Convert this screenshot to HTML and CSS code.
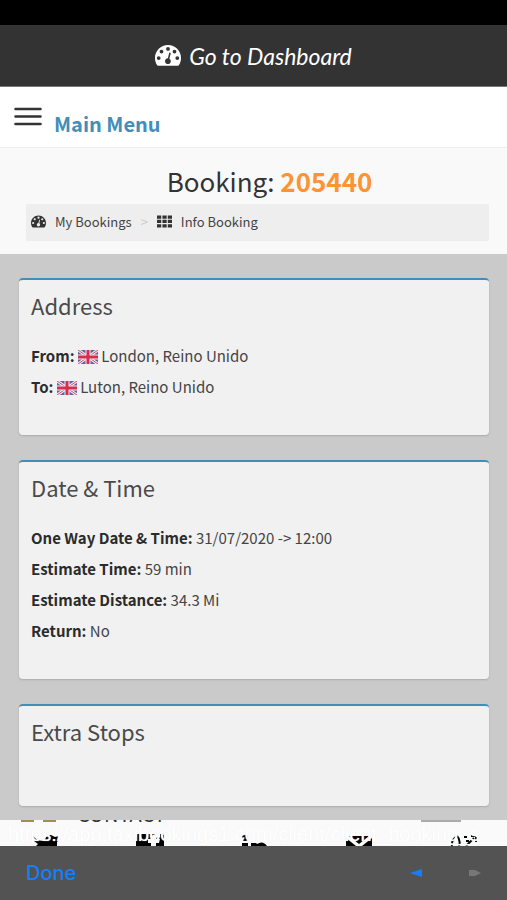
FILE: index.html
```html
<!DOCTYPE html>
<html lang="en">
<head>
<meta charset="utf-8">
<meta name="viewport" content="width=device-width, initial-scale=1">
<title>Booking: 205440</title>
<link rel="stylesheet" href="styles.css">
</head>
<body>
<svg class="defs" aria-hidden="true">
  <symbol id="gauge" viewBox="0 0 26 21">
    <path fill-rule="evenodd" d="M13 0C5.800 0 0 5.800 0 13c0 2.600.7 5 2 7 .3.500.700.800 1.300.800h19.400c.600 0 1-.300 1.300-.800 1.300-2 2-4.400 2-7C26 5.800 20.200 0 13 0zM3.700 11.200a1.900 1.900 0 1 1 0 3.800 1.900 1.900 0 0 1 0-3.800zM6.500 4.700a1.900 1.900 0 1 1 0 3.800 1.900 1.900 0 0 1 0-3.800zM13 2a1.900 1.900 0 1 1 0 3.800A1.900 1.900 0 0 1 13 2zM19.500 4.700a1.900 1.900 0 1 1 0 3.800 1.900 1.900 0 0 1 0-3.800zM22.300 11.200a1.900 1.900 0 1 1 0 3.800 1.900 1.900 0 0 1 0-3.800zM14.300 7.500l1.500.400-1.400 5.800a2.900 2.900 0 1 1-1.500-.4z"/>
  </symbol>
  <symbol id="flag" viewBox="0 0 20 14">
    <rect width="20" height="14" rx="1" fill="#5b68a5"/>
    <path d="M0 0l20 14M20 0L0 14" stroke="#f5e9ef" stroke-width="3"/>
    <path d="M0 0l20 14M20 0L0 14" stroke="#d8476b" stroke-width="1"/>
    <path d="M10 0v14M0 7h20" stroke="#f5e9ef" stroke-width="5"/>
    <path d="M10 0v14M0 7h20" stroke="#d52f50" stroke-width="3"/>
  </symbol>
</svg>
<div class="screen">
  <div class="status"></div>
  <header class="dash"><a href="#"><svg class="dash-icon" aria-hidden="true"><use href="#gauge"/></svg>Go to Dashboard</a></header>
  <nav class="menu">
    <button type="button" aria-label="Toggle menu"><svg viewBox="0 0 28 20" aria-hidden="true"><path d="M1.500 2h25M1.500 9.500h25M1.500 17h25"/></svg></button>
    <a href="#">Main Menu</a>
  </nav>
  <section class="heading">
    <h1>Booking: <strong>205440</strong></h1>
    <nav class="crumbs" aria-label="Breadcrumb">
      <a href="#"><svg class="crumb-icon" aria-hidden="true"><use href="#gauge"/></svg>My Bookings</a>
      <span class="sep">&gt;</span>
      <a href="#"><svg class="crumb-icon" viewBox="0 0 16 13" aria-hidden="true"><path d="M0 0h4.500v3.500H0zM5.800 0h4.500v3.500H5.800zM11.500 0H16v3.500h-4.500zM0 4.700h4.500v3.500H0zM5.800 4.700h4.500v3.500H5.800zM11.500 4.700H16v3.500h-4.500zM0 9.400h4.500v3.500H0zM5.800 9.400h4.500v3.500H5.800zM11.500 9.400H16v3.500h-4.500z"/></svg>Info Booking</a>
    </nav>
  </section>
  <main>
    <section class="card">
      <h2>Address</h2>
      <p><b>From:</b> <svg class="flag" role="img" aria-label="United Kingdom"><use href="#flag"/></svg> London, Reino Unido</p>
      <p><b>To:</b> <svg class="flag" role="img" aria-label="United Kingdom"><use href="#flag"/></svg> Luton, Reino Unido</p>
    </section>
    <section class="card">
      <h2>Date &amp; Time</h2>
      <p><b>One Way Date &amp; Time:</b> 31/07/2020 -&gt; 12:00</p>
      <p><b>Estimate Time:</b> 59 min</p>
      <p><b>Estimate Distance:</b> 34.3 Mi</p>
      <p><b>Return:</b> No</p>
    </section>
    <section class="card">
      <h2>Extra Stops</h2>
    </section>
  </main>
  <div class="strip">
    <div class="contact">
      <span class="mark"></span><span class="mark"></span>
      <span class="contact-name">CONTACT</span>
      <span class="contact-button"></span>
    </div>
    <div class="social">
      <svg viewBox="0 0 28 12" aria-hidden="true"><path d="M1 2c3 4 7 5 12 5 0-4 3-6 6-6l4 2 4-1-1 3 1 1-2 2v4H4l2-2-4-3 2-1-3-3z"/></svg>
      <svg viewBox="0 0 28 12" aria-hidden="true"><path fill-rule="evenodd" d="M2 0h24q2 0 2 2v10h-8V9h3l1-4h-4q0-2 4-2V0q-9-1-9 5h-3v4h3v3H0V2q0-2 2-2z"/></svg>
      <svg viewBox="0 0 28 12" aria-hidden="true"><circle cx="4" cy="4" r="3"/><path d="M1 9h6v3H1zM10 9h5l1 1q6-4 10 2H10z"/></svg>
      <svg viewBox="0 0 28 12" aria-hidden="true"><path d="M4 2h20l-10 8zM1 4l10 8H1zM27 4L17 12h10z"/></svg>
      <svg viewBox="0 0 28 12" aria-hidden="true"><path d="M8 2q-6 4-5 10M8 2q4 4 2 10M15 3h3M22 2h5v6M25 4l-8 8M17 7h3" fill="none" stroke="#000" stroke-width="2"/></svg>
    </div>
    <span class="url">https://app.taxibookings1.com/client/client_booking_s</span>
  </div>
  <footer class="toolbar">
    <button type="button">Done</button>
    <div class="arrows">
      <button type="button" aria-label="Back"><svg viewBox="0 0 12 8" aria-hidden="true"><path d="M0 4l12-4v8z"/></svg></button>
      <button type="button" aria-label="Forward" disabled><svg viewBox="0 0 12 8" aria-hidden="true"><path d="M0 1h6l6 3-6 3H0z"/></svg></button>
    </div>
  </footer>
</div>
</body>
</html>
```
FILE: styles.css
```css
* { box-sizing: border-box; }
body { margin: 0; background: #cacaca; color: #444; font: 15px/31px "Noto Sans CJK JP", "Noto Sans", sans-serif; }
a { color: inherit; text-decoration: none; }
button { border: 0; padding: 0; background: none; font: inherit; }
.defs { position: absolute; width: 0; height: 0; }
.screen { min-height: 100vh; display: flex; flex-direction: column; }
.status { height: 25px; background: #000; }
.dash { height: 62px; display: flex; justify-content: center; align-items: center; background: #333; border-bottom: 1px solid #777; color: #fff; font: italic 23px/30px Lato, sans-serif; }
.dash a { display: flex; align-items: center; gap: 8px; }
.dash-icon { width: 26px; height: 21px; fill: #fff; }
.menu { height: 60px; display: flex; gap: 12px; padding: 20px 14px 0; align-items: flex-start; background: #fff; color: #438eb9; font-weight: 700; font-size: 20px; line-height: 34px; }
.menu svg { display: block; width: 28px; height: 20px; stroke: #333; stroke-width: 2.500; stroke-linecap: round; }
.heading { padding: 15px 18px 13px 26px; background: #f9f9f9; border-top: 1px solid #eee; }
h1 { margin: 0 0 5px; padding-left: 24px; font-size: 26px; line-height: 36px; font-weight: 400; text-align: center; color: #333; }
h1 strong { color: #fb9435; }
.crumbs { display: flex; align-items: center; height: 37px; padding: 0 5px 2px; gap: 9px; background: #eee; border-radius: 2px; font-size: 13px; }
.crumbs a { display: flex; align-items: center; gap: 9px; }
.crumb-icon { width: 15px; height: 13px; fill: #333; }
.sep { color: #ccc; }
main { flex: 1; display: flex; flex-direction: column; gap: 25px; padding: 24px 18px 14px 19px; background: #cacaca; }
.card { min-height: 102px; padding: 7px 12px 33px; background: #f1f1f1; border-top: 2px solid #438eb9; border-radius: 4px; box-shadow: 0 1px 2px #aaa; }
h2 { margin: 0 0 17px; font-size: 22px; line-height: 36px; font-weight: 400; color: #4a4a4a; }
p { margin: 0; }
b { color: #2b2b2b; }
.flag { width: 20px; height: 14px; vertical-align: -2px; }
.strip { position: relative; height: 26px; overflow: hidden; display: flex; flex-direction: column; justify-content: space-between; background: #fafafa; }
.contact { height: 2px; overflow: hidden; display: flex; align-items: flex-end; gap: 9px; padding: 0 46px 0 21px; }
.mark { width: 13px; height: 2px; background: #a08f50; }
.contact-name { margin-left: 12px; color: #333; font-size: 20px; line-height: 16px; }
.contact-button { width: 40px; height: 2px; margin-left: auto; background: #aaa; }
.social { display: flex; justify-content: space-between; padding: 0 30px 0 32px; }
.social svg { display: block; width: 28px; height: 12px; }
.url { position: absolute; left: 8px; right: 0; top: 2px; overflow: hidden; white-space: nowrap; color: #fff; font: 20px/24px "Liberation Sans", sans-serif; text-shadow: 0 0 1px #eee; }
.toolbar { height: 54px; display: flex; align-items: center; justify-content: space-between; padding: 0 26px; background: #535353; color: #157efb; font: 500 20px/24px Inter, "Liberation Sans", sans-serif; }
.toolbar button { color: #157efb; }
.arrows { display: flex; gap: 47px; }
.arrows svg { display: block; width: 12px; height: 8px; fill: #157efb; }
.arrows button:disabled svg { fill: #777; }
```
